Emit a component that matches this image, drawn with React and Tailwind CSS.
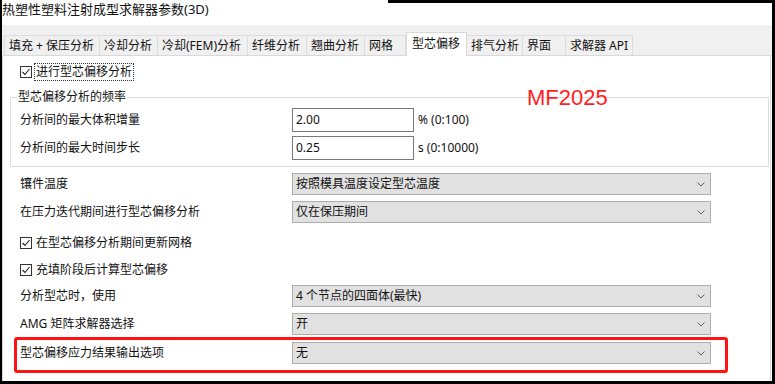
const tabs = [
  { label: '填充 + 保压分析', w: 'w-[96px]' },
  { label: '冷却分析', w: 'w-[58px]' },
  { label: '冷却(FEM)分析', w: 'w-[90px]' },
  { label: '纤维分析', w: 'w-[59px]' },
  { label: '翘曲分析', w: 'w-[58px]' },
  { label: '网格', w: 'w-[41px]' },
  { label: '型芯偏移', w: 'w-[61px]', active: true },
  { label: '排气分析', w: 'w-[56px]' },
  { label: '界面', w: 'w-[43px]' },
  { label: '求解器 API', w: 'w-[67px]' },
]

function Chevron() {
  return (
    <svg width="8" height="5" viewBox="0 0 8 5" className="shrink-0">
      <path d="M0.5 0.5 L4 4 L7.5 0.5" stroke="#606060" strokeWidth="1" fill="none" />
    </svg>
  )
}

function CheckBox() {
  return (
    <span className="flex h-[12px] w-[12px] shrink-0 items-center justify-center border border-[#333] bg-white">
      <svg width="10" height="10" viewBox="0 0 10 10">
        <path d="M1.5 5 L4 7.5 L8.5 2" stroke="#222" strokeWidth="1.1" fill="none" />
      </svg>
    </span>
  )
}

function Select({ value }) {
  return (
    <div className="flex h-[22px] w-[419px] items-center justify-between border border-[#adadad] bg-[#e1e1e1] pl-[3px] pr-[5px]">
      <span>{value}</span>
      <Chevron />
    </div>
  )
}

function SelectRow({ label, value, className = '' }) {
  return (
    <div className={`flex items-center ${className}`}>
      <span className="w-[272px] shrink-0">{label}</span>
      <Select value={value} />
    </div>
  )
}

function InputRow({ label, value, unit, className = '' }) {
  return (
    <div className={`flex items-center ${className}`}>
      <span className="w-[272px] shrink-0">{label}</span>
      <div className="flex h-[24px] w-[122px] items-center border border-[#7a7a7a] bg-white pl-[3px]">
        {value}
      </div>
      <span className="ml-[4px]">{unit}</span>
    </div>
  )
}

export default function App() {
  return (
    <div className="relative h-[384px] w-[775px] overflow-hidden border-b-[3px] border-l-[2px] border-r-[3px] border-black bg-white font-['Noto_Sans','Noto_Sans_CJK_SC',sans-serif] text-[12px] leading-[16px] text-[#111]">
      <div className="flex h-[25px] items-start">
        <span className="text-[13px] leading-[18px]">热塑性塑料注射成型求解器参数(3D)</span>
        <div className="ml-auto h-[3px] w-[384px] bg-black" />
      </div>

      <div className="flex h-[31px] items-end border-b border-[#d9d9d9] bg-[#f0f0f0] pl-[2px]">
        {tabs.map((t) =>
          t.active ? (
            <div
              key={t.label}
              className={`${t.w} -mb-px flex h-[24px] shrink-0 items-center whitespace-nowrap border-x border-t border-[#d9d9d9] bg-white px-[5px] pb-[2px]`}
            >
              {t.label}
            </div>
          ) : (
            <div
              key={t.label}
              className={`${t.w} flex h-[20px] shrink-0 items-center whitespace-nowrap border-r border-t border-[#dcdcdc] bg-[#f0f0f0] px-[4px] first:border-l`}
            >
              {t.label}
            </div>
          )
        )}
      </div>

      <div className="mr-[1px] flex h-[325px] flex-col border-x border-[#dadada]">
        <div className="ml-[17px] mt-[7px] flex h-[18px] items-center">
          <CheckBox />
          <span className="ml-[2px] flex h-[18px] items-center border border-dotted border-[#333] px-[1px]">
            进行型芯偏移分析
          </span>
        </div>

        <fieldset className="ml-[7px] mr-[1px] mt-[8px] border border-[#dcdcdc] pb-[6px]">
          <legend className="ml-[6px] px-[1px]">型芯偏移分析的频率</legend>
          <InputRow className="ml-[9px] mt-[3px]" label="分析间的最大体积增量" value="2.00" unit="% (0:100)" />
          <InputRow className="ml-[9px] mt-[4px]" label="分析间的最大时间步长" value="0.25" unit="s (0:10000)" />
        </fieldset>

        <SelectRow className="ml-[17px] mt-[6px]" label="镶件温度" value="按照模具温度设定型芯温度" />
        <SelectRow className="ml-[17px] mt-[6px]" label="在压力迭代期间进行型芯偏移分析" value="仅在保压期间" />

        <div className="ml-[17px] mt-[11px] flex h-[18px] items-center gap-[4px]">
          <CheckBox />
          <span>在型芯偏移分析期间更新网格</span>
        </div>
        <div className="ml-[17px] mt-[9px] flex h-[18px] items-center gap-[4px]">
          <CheckBox />
          <span>充填阶段后计算型芯偏移</span>
        </div>

        <SelectRow className="ml-[17px] mt-[6px]" label="分析型芯时，使用" value="4 个节点的四面体(最快)" />
        <SelectRow className="ml-[17px] mt-[6px]" label="AMG 矩阵求解器选择" value="开" />
        <SelectRow
          className="ml-[11px] mt-[2px] w-[714px] rounded-[3px] border-[3px] border-[#ff1414] pb-[6px] pl-[3px] pt-[2px]"
          label="型芯偏移应力结果输出选项"
          value="无"
        />
      </div>

      <span className="absolute left-[525px] top-[87px] font-['Liberation_Sans',sans-serif] text-[22px] leading-[22px] text-[#ff1e1e]">
        MF2025
      </span>
    </div>
  )
}
